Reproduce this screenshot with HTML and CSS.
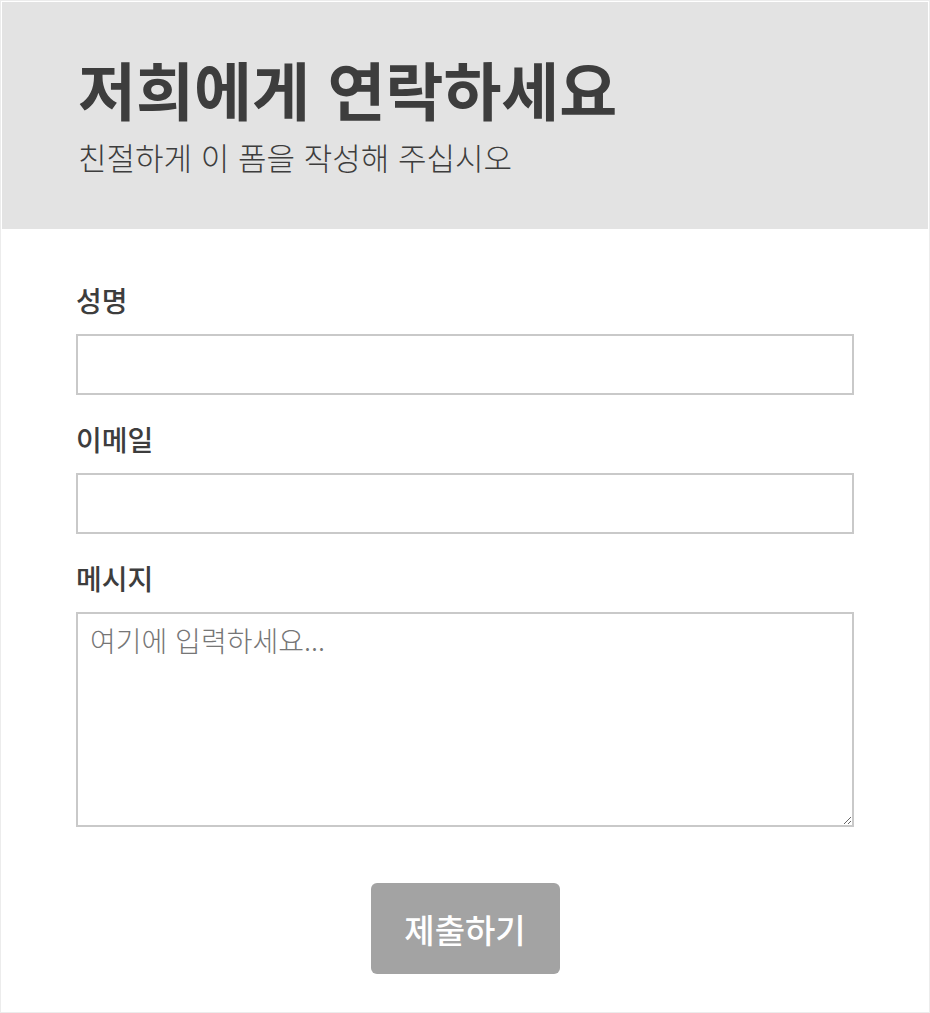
FILE: index.html
```html
<!DOCTYPE html>
<html lang="ko">
<head>
    <meta charset="UTF-8">
    <meta name="viewport" content="width=device-width, initial-scale=1.0">
    <title>연락하기</title>
    <link rel="stylesheet" href="styles.css">
</head>
<body>
    <div class="container">
        <div class="header">
            <h1>저희에게 연락하세요</h1>
            <p>친절하게 이 폼을 작성해 주십시오</p>
        </div>
        <form class="contact-form">
            <label for="name">성명</label>
            <input type="text" id="name">
            <label for="email">이메일</label>
            <input type="email" id="email">
            <label for="message">메시지</label>
            <textarea id="message" placeholder="여기에 입력하세요..."></textarea>
            <div class="actions">
                <button type="submit">제출하기</button>
            </div>
        </form>
    </div>
</body>
</html>
```

FILE: styles.css
```css
body {
    font-family: "Noto Sans CJK KR", "Noto Sans", sans-serif;
    background-color: #fff;
    color: #3d3d3d;
    margin: 0;
    padding: 0;
}
.container {
    border: 1px solid #ececec;
    padding: 1px;
    height: 1009px;
}
.header {
    background-color: #e3e3e3;
    padding: 51px 76px 54px;
}
.header h1 {
    margin: 0;
    font-size: 63px;
    line-height: 70px;
    font-weight: bold;
}
.header p {
    margin: 16px 0 0;
    font-size: 31px;
    line-height: 36px;
    font-weight: 300;
}
.contact-form {
    display: flex;
    flex-direction: column;
    padding: 53px 74px 0;
}
.contact-form label {
    font-size: 28px;
    line-height: 36px;
    font-weight: 500;
    color: #3d3d3d;
}
.contact-form input,
.contact-form textarea {
    box-sizing: border-box;
    border: 2px solid #c9c9c9;
    margin: 16px 0 26px;
    font-family: inherit;
    font-size: 28px;
    font-weight: 300;
    color: #333;
}
.contact-form input {
    height: 61px;
    padding: 0 12px;
}
.contact-form textarea {
    height: 215px;
    padding: 6px 12px;
    margin-bottom: 0;
    resize: vertical;
}
.contact-form textarea::placeholder {
    color: #767676;
}
.actions {
    display: flex;
    justify-content: center;
    margin-top: 56px;
}
button {
    width: 189px;
    height: 91px;
    border: none;
    border-radius: 6px;
    background-color: #a3a3a3;
    color: #fff;
    font-family: inherit;
    font-size: 33px;
    font-weight: 500;
    cursor: pointer;
}
```
